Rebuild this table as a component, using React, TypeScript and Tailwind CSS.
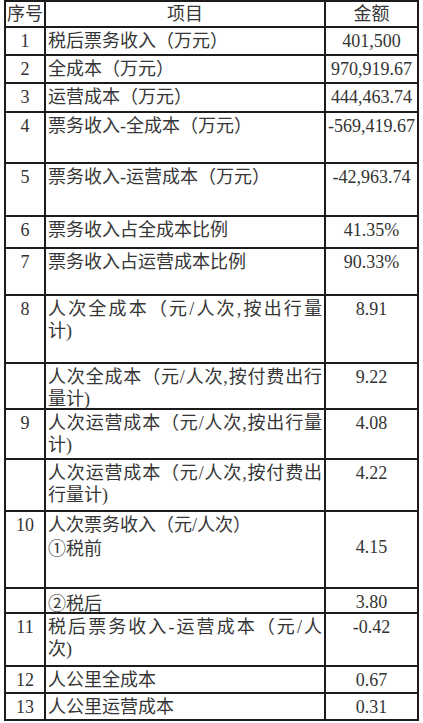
import React from "react";

type Line = { t: string; j?: boolean; c?: string };
type Row = { n: string; lines: Line[]; v: string; vLine?: number; h: number };

const rows: Row[] = [
  { n: "1", lines: [{ t: "税后票务收入（万元）" }], v: "401,500", h: 28 },
  { n: "2", lines: [{ t: "全成本（万元）" }], v: "970,919.67", h: 28 },
  { n: "3", lines: [{ t: "运营成本（万元）" }], v: "444,463.74", h: 29 },
  { n: "4", lines: [{ t: "票务收入-全成本（万元）" }], v: "-569,419.67", h: 51 },
  { n: "5", lines: [{ t: "票务收入-运营成本（万元）" }], v: "-42,963.74", h: 53 },
  { n: "6", lines: [{ t: "票务收入占全成本比例" }], v: "41.35%", h: 32 },
  { n: "7", lines: [{ t: "票务收入占运营成本比例" }], v: "90.33%", h: 47 },
  {
    n: "8",
    lines: [{ t: "人次全成本（元/人次,按出行量", j: true }, { t: "计)" }],
    v: "8.91",
    h: 68,
  },
  {
    n: "",
    lines: [{ t: "人次全成本（元/人次,按付费出行", j: true }, { t: "量计)" }],
    v: "9.22",
    h: 46,
  },
  {
    n: "9",
    lines: [{ t: "人次运营成本（元/人次,按出行量", j: true }, { t: "计)" }],
    v: "4.08",
    h: 50,
  },
  {
    n: "",
    lines: [{ t: "人次运营成本（元/人次,按付费出", j: true }, { t: "行量计)" }],
    v: "4.22",
    h: 52,
  },
  {
    n: "10",
    lines: [{ t: "人次票务收入（元/人次）" }, { c: "①", t: "税前" }],
    v: "4.15",
    vLine: 1,
    h: 77,
  },
  { n: "", lines: [{ c: "②", t: "税后" }], v: "3.80", h: 25 },
  {
    n: "11",
    lines: [{ t: "税后票务收入-运营成本（元/人", j: true }, { t: "次)" }],
    v: "-0.42",
    h: 53,
  },
  { n: "12", lines: [{ t: "人公里全成本" }], v: "0.67", h: 27 },
  { n: "13", lines: [{ t: "人公里运营成本" }], v: "0.31", h: 27 },
];

export default function App() {
  return (
    <div className="w-[423px] h-[723px] bg-white overflow-hidden [font-family:'Liberation_Serif','Noto_Sans_CJK_SC',serif] text-[18px] leading-[22px] text-[#363636]">
      <div className="ml-[4px] w-[415px] border-2 border-b-0 border-[#1c1c1c]">
        <div className="flex h-[26px] border-b-2 border-[#1c1c1c]">
          <div className="w-[40px] shrink-0 border-r-2 border-[#1c1c1c] text-center pt-[1px]">
            序号
          </div>
          <div className="w-[280px] shrink-0 border-r-2 border-[#1c1c1c] text-center pt-[1px]">
            项目
          </div>
          <div className="flex-1 text-center pt-[1px]">金额</div>
        </div>
        {rows.map((r, i) => (
          <div
            key={i}
            className="flex border-b-2 border-[#1c1c1c]"
            style={{ height: r.h }}
          >
            <div className="w-[40px] shrink-0 border-r-2 border-[#1c1c1c] text-center pt-[2px] text-[#333]">
              {r.n}
            </div>
            <div className="w-[280px] shrink-0 border-r-2 border-[#1c1c1c] pl-[2px] pr-[2px] pt-[2px]">
              {r.lines.map((l, k) => (
                <div
                  key={k}
                  className={
                    l.j
                      ? "whitespace-nowrap text-justify [text-align-last:justify]"
                      : "whitespace-nowrap"
                  }
                >
                  {l.c && (
                    <span className="[font-family:'Noto_Sans_CJK_SC',sans-serif]">
                      {l.c}
                    </span>
                  )}
                  {l.t}
                </div>
              ))}
            </div>
            <div className="flex-1 text-center pt-[2px] text-[#333] whitespace-nowrap">
              {r.vLine === 1 && <div>&nbsp;</div>}
              <div>{r.v}</div>
            </div>
          </div>
        ))}
      </div>
    </div>
  );
}
